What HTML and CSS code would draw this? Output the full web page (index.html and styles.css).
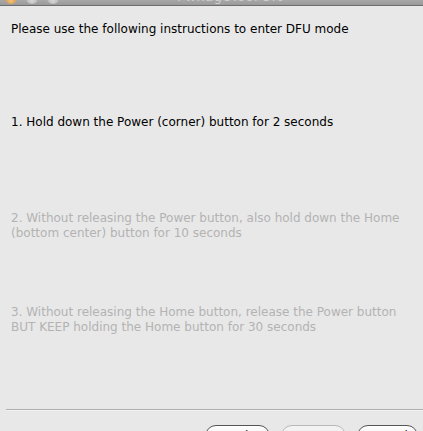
FILE: index.html
```html
<!DOCTYPE html>
<html>
<head>
<meta charset="utf-8">
<link rel="stylesheet" href="styles.css">
</head>
<body>
<div class="titlebar">
  <div class="lights">
    <span class="light close"></span>
    <span class="light"></span>
    <span class="light"></span>
  </div>
  <div class="title">PwnageTool 5.0</div>
</div>
<div class="main">
  <p class="intro">Please use the following instructions to enter DFU mode</p>
  <p class="step step1">1. Hold down the Power (corner) button for 2 seconds</p>
  <p class="step step2 disabled">2. Without releasing the Power button, also hold down the Home<br>(bottom center) button for 10 seconds</p>
  <p class="step step3 disabled">3. Without releasing the Home button, release the Power button<br>BUT KEEP holding the Home button for 30 seconds</p>
</div>
<div class="sep"></div>
<div class="buttons">
  <button class="btn b-back">Back</button>
  <button class="btn b-next off">Next</button>
  <button class="btn b-cancel">Cancel</button>
</div>
</body>
</html>
```
FILE: styles.css
```css
html, body {
  margin: 0;
  padding: 0;
  height: 431px;
  overflow: hidden;
  background: #e8e8e8;
  font-family: "DejaVu Sans", "Liberation Sans", sans-serif;
  font-size: 12px;
  color: #000;
}
.titlebar {
  height: 5px;
  background: linear-gradient(#a8a8a8, #9a9a9a);
  border-bottom: 1px solid #6e6e6e;
  position: relative;
  overflow: hidden;
  display: flex;
}
.lights {
  display: flex;
  gap: 9px;
  padding-left: 5px;
  margin-top: -8px;
}
.light {
  width: 12px;
  height: 12px;
  border-radius: 50%;
  background: radial-gradient(circle at 50% 70%, #d8d8d8, #9c9c9c);
}
.light.close {
  background: radial-gradient(circle at 50% 70%, #f3c27a, #c07a30);
}
.title {
  position: absolute;
  left: 177px;
  top: -11px;
  font-size: 13px;
  color: #cfcfcf;
  letter-spacing: 0.5px;
}
.main {
  padding: 16px 0 0 11px;
}
p {
  margin: 0;
  line-height: 15px;
}
.step1 { margin-top: 78px; }
.step2 { margin-top: 81px; }
.step3 { margin-top: 64px; }
.disabled { color: #b3b3b3; }
.sep {
  margin: 74px 0 0 6px;
  height: 1px;
  background: #b0b0b0;
  border-bottom: 1px solid #f2f2f2;
}
.buttons {
  display: flex;
  justify-content: flex-end;
  gap: 11px;
  padding-right: 5px;
  margin-top: 14px;
}
.btn {
  height: 22px;
  border-radius: 11px;
  border: 1px solid #555;
  background: linear-gradient(#ffffff, #e4e4e4);
  font-family: "DejaVu Sans", sans-serif;
  font-size: 12px;
  color: #111;
  padding: 0;
  width: 65px;
}
.b-cancel { width: 61px; }
.btn.off {
  border-color: #b8b8b8;
  color: #a8a8a8;
  background: linear-gradient(#f4f4f4, #e8e8e8);
}
```
